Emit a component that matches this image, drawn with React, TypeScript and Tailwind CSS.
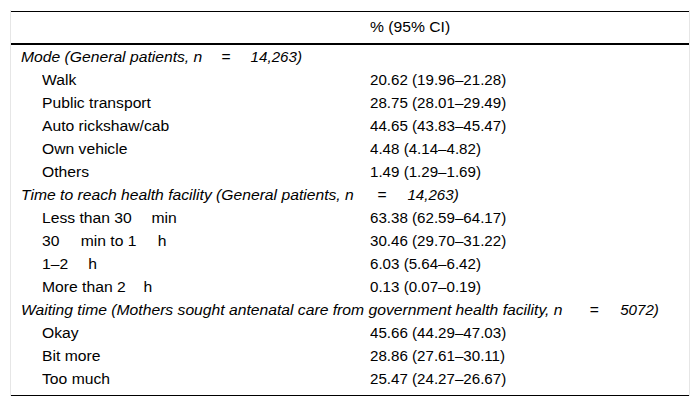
import React from 'react';

type Row =
  | { kind: 'group'; label: React.ReactNode }
  | { kind: 'item'; label: React.ReactNode; value: string };

// espacio fijo, como los espacios finos del original
const Gap = ({ className }: { className: string }) => (
  <span className={`inline-block ${className}`} />
);

// el texto del original sale algo ensanchado (letras más que cifras)
const Txt = ({ children }: { children: React.ReactNode }) => (
  <span className="inline-block origin-left scale-x-[1.12] whitespace-nowrap">{children}</span>
);

const Num = ({ children }: { children: React.ReactNode }) => (
  <span className="inline-block origin-left scale-x-[1.08] whitespace-nowrap">{children}</span>
);

// cifra dentro de un texto ya ensanchado
const Tail = ({ children }: { children: React.ReactNode }) => (
  <span className="inline-block origin-left scale-x-[0.965]">{children}</span>
);

const rows: Row[] = [
  {
    kind: 'group',
    label: (
      <>
        Mode (General patients, n<Gap className="w-[17px]" />=<Gap className="w-[18px]" />
        <Tail>14,263)</Tail>
      </>
    ),
  },
  { kind: 'item', label: 'Walk', value: '20.62 (19.96–21.28)' },
  { kind: 'item', label: 'Public transport', value: '28.75 (28.01–29.49)' },
  { kind: 'item', label: 'Auto rickshaw/cab', value: '44.65 (43.83–45.47)' },
  { kind: 'item', label: 'Own vehicle', value: '4.48 (4.14–4.82)' },
  { kind: 'item', label: 'Others', value: '1.49 (1.29–1.69)' },
  {
    kind: 'group',
    label: (
      <>
        Time to reach health facility (General patients, n<Gap className="w-[21px]" />=<Gap className="w-[18.5px]" />
        <Tail>14,263)</Tail>
      </>
    ),
  },
  {
    kind: 'item',
    label: (
      <>
        Less than 30<Gap className="w-[17.5px]" />min
      </>
    ),
    value: '63.38 (62.59–64.17)',
  },
  {
    kind: 'item',
    label: (
      <>
        30<Gap className="w-[19px]" />min to 1<Gap className="w-[19px]" />h
      </>
    ),
    value: '30.46 (29.70–31.22)',
  },
  {
    kind: 'item',
    label: (
      <>
        1–2<Gap className="w-[18px]" />h
      </>
    ),
    value: '6.03 (5.64–6.42)',
  },
  {
    kind: 'item',
    label: (
      <>
        More than 2<Gap className="w-[16px]" />h
      </>
    ),
    value: '0.13 (0.07–0.19)',
  },
  {
    kind: 'group',
    label: (
      <>
        Waiting time (Mothers sought antenatal care from government health facility, n<Gap className="w-[24px]" />=<Gap className="w-[19.5px]" />
        <Tail>5072)</Tail>
      </>
    ),
  },
  { kind: 'item', label: 'Okay', value: '45.66 (44.29–47.03)' },
  { kind: 'item', label: 'Bit more', value: '28.86 (27.61–30.11)' },
  { kind: 'item', label: 'Too much', value: '25.47 (24.27–26.67)' },
];

export default function App() {
  return (
    <div className="min-h-[407px] w-[700px] bg-white pt-[10px] text-black font-['Liberation_Sans',Arial,sans-serif] text-[14px]">
      <div className="ml-[10px] w-[680px] border-x border-[#e6e6e6] pt-px">
        <div className="border-t border-black">
          {/* encabezado */}
          <div className="grid h-[33px] grid-cols-[359px_1fr] border-b-2 border-black leading-[31px]">
            <div />
            <div>
              <Txt>% (95% CI)</Txt>
            </div>
          </div>

          {/* cuerpo */}
          <div className="pt-px pb-[4px]">
            {rows.map((row, i) =>
              row.kind === 'group' ? (
                <div key={i} className="h-[23px] whitespace-nowrap pl-[10px] italic leading-[23px]">
                  <Txt>{row.label}</Txt>
                </div>
              ) : (
                <div key={i} className="grid h-[23px] grid-cols-[359px_1fr] leading-[23px]">
                  <div className="whitespace-nowrap pl-[31px]">
                    <Txt>{row.label}</Txt>
                  </div>
                  <div className="whitespace-nowrap">
                    <Num>{row.value}</Num>
                  </div>
                </div>
              )
            )}
          </div>
        </div>
        <div className="border-t border-black" />
      </div>
    </div>
  );
}
